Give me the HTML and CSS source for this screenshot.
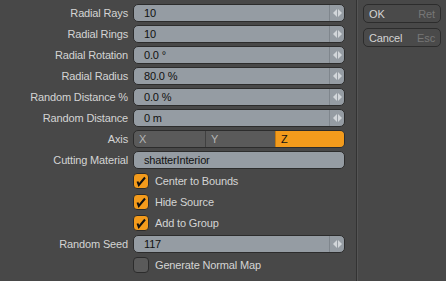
FILE: index.html
```html
<!DOCTYPE html>
<html>
<head>
    <title>Shatter Radial</title>
    <link rel="stylesheet" href="styles.css">
</head>
<body>
    <div class="dialog">
        <div class="form">
            <div class="row">
                <label>Radial Rays</label>
                <div class="field spin"><span class="value">10</span><span class="arrows"></span></div>
            </div>
            <div class="row">
                <label>Radial Rings</label>
                <div class="field spin"><span class="value">10</span><span class="arrows"></span></div>
            </div>
            <div class="row">
                <label>Radial Rotation</label>
                <div class="field spin"><span class="value">0.0 °</span><span class="arrows"></span></div>
            </div>
            <div class="row">
                <label>Radial Radius</label>
                <div class="field spin"><span class="value">80.0 %</span><span class="arrows"></span></div>
            </div>
            <div class="row">
                <label>Random Distance %</label>
                <div class="field spin"><span class="value">0.0 %</span><span class="arrows"></span></div>
            </div>
            <div class="row">
                <label>Random Distance</label>
                <div class="field spin"><span class="value">0 m</span><span class="arrows"></span></div>
            </div>
            <div class="row">
                <label>Axis</label>
                <div class="choice">
                    <span>X</span>
                    <span>Y</span>
                    <span class="active">Z</span>
                </div>
            </div>
            <div class="row">
                <label>Cutting Material</label>
                <div class="field"><span class="value">shatterInterior</span></div>
            </div>
            <div class="row">
                <label></label>
                <div class="check">
                    <span class="box on"><svg viewBox="0 0 14 14"><path d="M3.5 7.5 L4.8 11 L11 3.5"/></svg></span>
                    Center to Bounds
                </div>
            </div>
            <div class="row">
                <label></label>
                <div class="check">
                    <span class="box on"><svg viewBox="0 0 14 14"><path d="M3.5 7.5 L4.8 11 L11 3.5"/></svg></span>
                    Hide Source
                </div>
            </div>
            <div class="row">
                <label></label>
                <div class="check">
                    <span class="box on"><svg viewBox="0 0 14 14"><path d="M3.5 7.5 L4.8 11 L11 3.5"/></svg></span>
                    Add to Group
                </div>
            </div>
            <div class="row">
                <label>Random Seed</label>
                <div class="field spin"><span class="value">117</span><span class="arrows"></span></div>
            </div>
            <div class="row">
                <label></label>
                <div class="check"><span class="box"></span>Generate Normal Map</div>
            </div>
        </div>

        <div class="actions">
            <button><span>OK</span><span class="key">Ret</span></button>
            <button><span>Cancel</span><span class="key">Esc</span></button>
        </div>
    </div>
</body>
</html>
```

FILE: styles.css
```css
body {
    margin: 0;
    background: #484848;
    font-family: "Liberation Sans", Arial, sans-serif;
    font-size: 11px;
    letter-spacing: -0.15px;
    color: #d4d4d4;
}

.dialog {
    display: flex;
    height: 281px;
}

.form {
    width: 356px;
    padding-top: 4px;
    border-right: 1px solid #333;
    box-shadow: 1px 0 0 #555;
}

.row {
    display: grid;
    grid-template-columns: 128px 212px;
    column-gap: 5px;
    height: 18px;
    margin-bottom: 3px;
    align-items: center;
}

.row label {
    text-align: right;
}

.field {
    display: flex;
    height: 18px;
    box-sizing: border-box;
    background: #959ca3;
    border: 1px solid #2c2c2c;
    border-radius: 5px;
    color: #111;
    align-items: center;
}

.field .value {
    flex: 1;
    padding-left: 10px;
}

.field .arrows {
    width: 14px;
    height: 100%;
    border-left: 1px solid #7f868d;
    position: relative;
}

.field .arrows::before,
.field .arrows::after {
    content: "";
    position: absolute;
    top: 4px;
    border-top: 4px solid transparent;
    border-bottom: 4px solid transparent;
}

.field .arrows::before {
    left: 3px;
    border-right: 4px solid #d2d6da;
}

.field .arrows::after {
    left: 8px;
    border-left: 4px solid #d2d6da;
}

.choice {
    display: grid;
    grid-template-columns: 71px 70px 71px;
    height: 18px;
    box-sizing: border-box;
    background: #5a5a5a;
    border: 1px solid #2c2c2c;
    border-radius: 5px;
    overflow: hidden;
    color: #b4b4b4;
}

.choice span {
    padding-left: 5px;
    line-height: 16px;
    border-left: 1px solid #404040;
}

.choice span:first-child {
    border-left: none;
}

.choice .active {
    background: #f39b1c;
    color: #111;
    border-left: 1px solid #c47a10;
}

.check {
    display: flex;
    align-items: center;
    gap: 6px;
}

.box {
    display: block;
    width: 16px;
    height: 16px;
    box-sizing: border-box;
    background: #5a5a5a;
    border: 1px solid #2c2c2c;
    border-radius: 4px;
}

.box.on {
    background: #f39b1c;
}

.box svg {
    display: block;
    width: 14px;
    height: 14px;
}

.box path {
    fill: none;
    stroke: #111;
    stroke-width: 2;
    stroke-linejoin: miter;
}

.actions {
    display: flex;
    flex-direction: column;
    gap: 5px;
    padding: 4px 5px 0 6px;
}

.actions button {
    display: flex;
    justify-content: space-between;
    align-items: center;
    width: 78px;
    height: 19px;
    padding: 0 5px;
    background: #4a4a4a;
    border: 1px solid #2c2c2c;
    border-radius: 5px;
    font: inherit;
    letter-spacing: inherit;
    color: #d4d4d4;
}

.actions .key {
    color: #777;
}
```
